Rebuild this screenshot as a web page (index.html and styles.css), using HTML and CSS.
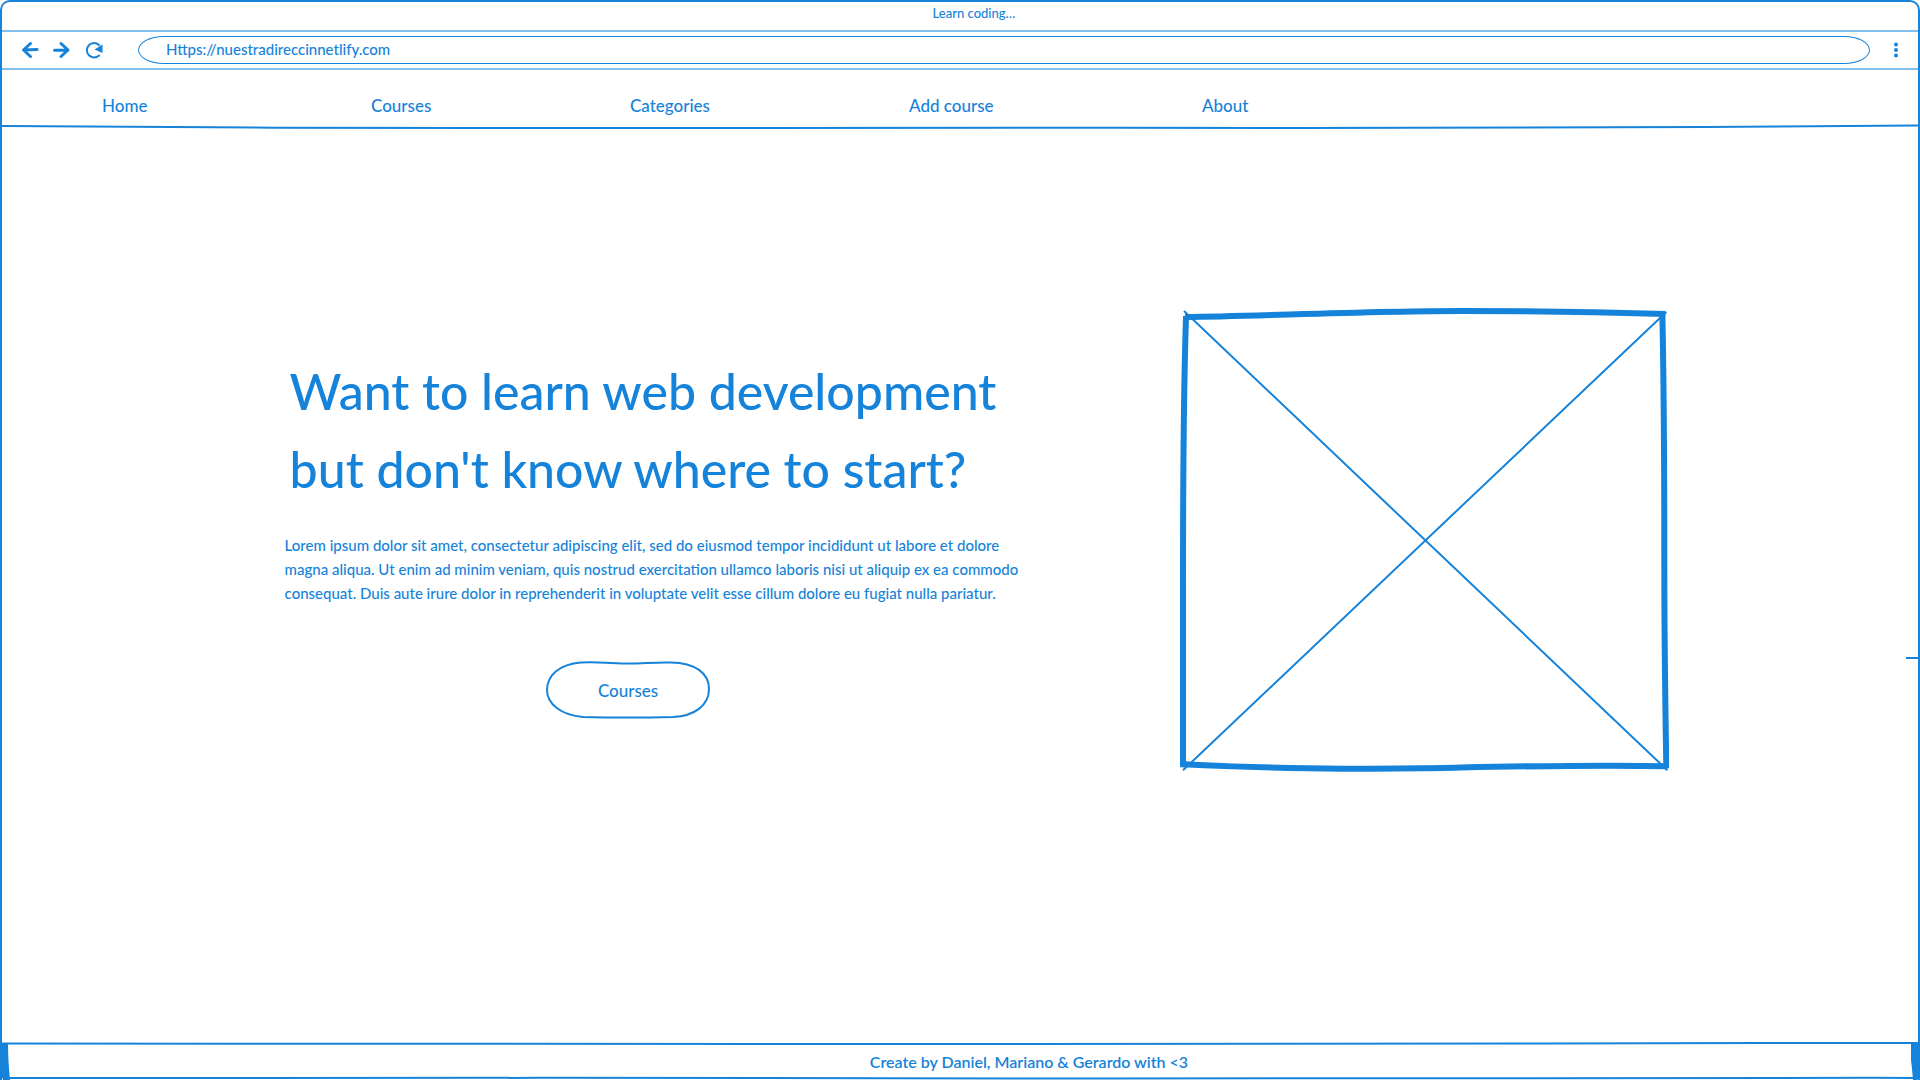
FILE: index.html
```html
<!DOCTYPE html>
<html lang="en">
<head>
  <meta charset="utf-8">
  <meta name="viewport" content="width=device-width, initial-scale=1">
  <title>Learn coding…</title>
  <link rel="stylesheet" href="styles.css">
</head>
<body>
  <div class="frame">
    <div class="titlebar">Learn coding…</div>

    <div class="toolbar">
      <div class="history">
        <button class="icon-button" type="button" aria-label="Back">
          <svg class="icon" viewBox="0 0 20 20"><path d="M10.500 3.500 3.500 10l7 6.500M3.500 10 17 9.500" /></svg>
        </button>
        <button class="icon-button" type="button" aria-label="Forward">
          <svg class="icon" viewBox="0 0 20 20"><path d="M9 3.500 16 10l-7 6.500M16 10 2.500 10.200" /></svg>
        </button>
        <button class="icon-button" type="button" aria-label="Reload">
          <svg class="icon" viewBox="0 0 20 20"><path class="thin" d="M15 5A7.200 7.200 0 1 0 15 15.500" /><path class="solid" d="M10.500 9.500 18.500 4.500V13Z" /></svg>
        </button>
      </div>
      <input class="address" type="text" aria-label="Address" value="Https://nuestradireccinnetlify.com">
      <button class="icon-button" type="button" aria-label="Menu">
        <svg class="icon" viewBox="0 0 20 20"><g class="solid"><circle cx="10" cy="4.500" r="2" /><circle cx="10" cy="10" r="2" /><circle cx="10" cy="15.500" r="2" /></g></svg>
      </button>
    </div>

    <nav class="nav">
      <a href="#">Home</a>
      <a href="#">Courses</a>
      <a href="#">Categories</a>
      <a href="#">Add course</a>
      <a href="#">About</a>
    </nav>
    <svg class="rule" viewBox="0 0 1920 6" preserveAspectRatio="none" aria-hidden="true">
      <path d="M0 2C200 3.500 300 4 480 4S1000 3.500 1300 4 1700 3 1920 1.500" />
    </svg>

    <main class="hero">
      <div class="copy">
        <h1>Want to learn web development<br>but don't know where to start?</h1>
        <p>Lorem ipsum dolor sit amet, consectetur adipiscing elit, sed do eiusmod tempor incididunt ut labore et dolore<br>magna aliqua. Ut enim ad minim veniam, quis nostrud exercitation ullamco laboris nisi ut aliquip ex ea commodo<br>consequat. Duis aute irure dolor in reprehenderit in voluptate velit esse cillum dolore eu fugiat nulla pariatur.</p>
        <button class="cta" type="button">
          <svg class="cta-outline" viewBox="0 0 166 58" aria-hidden="true"><path d="M36 1.500C50 0.500 70 2.500 84 2.500S112 1 126 1.500C150 2 164 12 164 28S150 55 128 56Q82 57 38 56C16 54 2 43 2 29S14 3 36 1.500Z" /></svg>
          <span>Courses</span>
        </button>
      </div>
      <svg class="picture" viewBox="0 0 488 464" role="img" aria-label="Picture placeholder">
        <path class="cross" d="M4 3 486 461M485 4 3 461" />
        <path class="edge" d="M5 9C80 8 190 3 280 3Q380 3 484 6" />
        <path class="edge" d="M481 5C483 100 483 190 483 260S484 400 485 459" />
        <path class="edge" d="M3 455C80 459 180 460 240 459S400 455 486 457" />
        <path class="edge" d="M6 8C3 100 3 190 3 270S3 400 3 458" />
      </svg>
    </main>

    <svg class="tick" viewBox="0 0 12 4" aria-hidden="true"><path d="M0 2H12" /></svg>

    <footer class="footer">
      <svg class="footer-line" viewBox="0 0 1920 4" preserveAspectRatio="none" aria-hidden="true"><path d="M0 1.500C300 2 500 1.500 960 2S1500 1.500 1760 1 1880 1.500 1920 1.500" /></svg>
      <div class="footer-row">
        <svg class="footer-side" viewBox="0 0 10 30" aria-hidden="true"><path d="M0-3H8Q8 14 10 34H3Q0 26 0 20Z" /></svg>
        <p class="credit">Create by Daniel, Mariano &amp; Gerardo with &lt;3</p>
        <svg class="footer-side" viewBox="0 0 10 30" aria-hidden="true"><path d="M1-3H10V32L7 34H3Q2 22 1 14Z" /></svg>
      </div>
      <svg class="footer-line" viewBox="0 0 1920 4" preserveAspectRatio="none" aria-hidden="true"><path d="M4 2C400 1.500 700 2 1100 2.500S1700 1 1914 2" /></svg>
    </footer>
  </div>
</body>
</html>
```
FILE: styles.css
```css
:root {
  --ink: #1683da;
  --ink-soft: #83bfec;
}

* {
  box-sizing: border-box;
}

body {
  margin: 0;
  background: #fff;
  color: var(--ink);
  font-family: Lato, "Open Sans", sans-serif;
  font-weight: 500;
}

h1,
p {
  margin: 0;
  font-weight: inherit;
}

svg {
  display: block;
  fill: none;
  stroke: var(--ink);
  stroke-width: 2;
}

button,
input {
  margin: 0;
  padding: 0;
  border: 0;
  background: none;
  color: inherit;
  font: inherit;
}

.frame {
  position: relative;
  display: flex;
  flex-direction: column;
  min-height: 100vh;
  border: 2px solid var(--ink);
  border-bottom: 0;
  border-radius: 10px 10px 0 0;
}

/* Browser chrome */
.titlebar {
  height: 30px;
  padding-left: 28px;
  border-bottom: 2px solid var(--ink-soft);
  font-size: 13px;
  line-height: 22px;
  text-align: center;
}

.toolbar {
  display: flex;
  align-items: center;
  height: 38px;
  padding: 0 12px 0 18px;
  border-bottom: 2px solid var(--ink-soft);
}

.history {
  display: flex;
  gap: 12px;
}

.icon-button {
  width: 20px;
  height: 20px;
}

.icon {
  width: 20px;
  height: 20px;
  stroke-width: 3;
  stroke-linecap: round;
  stroke-linejoin: round;
}

.icon .thin {
  stroke-width: 2;
}

.icon .solid {
  fill: var(--ink);
  stroke: none;
}

.address {
  flex: 1;
  min-width: 0;
  height: 28px;
  margin: 0 16px 0 34px;
  padding: 0 27px 2px;
  border: 1px solid var(--ink);
  border-radius: 26px / 14px;
  font-size: 15px;
}

.nav {
  display: grid;
  grid-template-columns: 269fr 259fr 279fr 293fr 716fr;
  height: 54px;
  padding: 24px 0 0 100px;
  font-size: 17px;
  line-height: 24px;
}

.nav a {
  justify-self: start;
  color: inherit;
  text-decoration: none;
}

.rule {
  width: 100%;
  height: 6px;
}

/* Hero */
.hero {
  flex: 1;
  display: grid;
  grid-template-columns: minmax(0, 713fr) minmax(0, 488fr);
  column-gap: 13%;
  align-items: start;
  padding: 178px 13% 120px 14.75%;
}

.copy {
  display: flex;
  flex-direction: column;
  padding-top: 44px;
}

.copy h1 {
  padding-left: 5px;
  font-size: 50px;
  line-height: 78px;
  white-space: nowrap;
}

.copy p {
  margin-top: 25px;
  font-size: 15px;
  line-height: 24px;
  white-space: nowrap;
}

.cta {
  position: relative;
  align-self: center;
  width: 166px;
  height: 58px;
  margin: 56px 28px 0 0;
  font-size: 17px;
}

.cta-outline {
  position: absolute;
  inset: 0;
  width: 100%;
  height: 100%;
}

.picture {
  width: 100%;
}

.picture .edge {
  stroke-width: 6;
}

.tick {
  position: absolute;
  top: 60.7%;
  right: 0;
  width: 12px;
  height: 4px;
}

/* Footer */
.footer {
  margin: 0 -2px;
}

.footer-line {
  width: 100%;
  height: 4px;
}

.footer-row {
  display: flex;
  justify-content: space-between;
  height: 30px;
}

.footer-side {
  width: 10px;
  height: 30px;
  overflow: visible;
  fill: var(--ink);
  stroke: none;
}

.credit {
  flex: 1;
  padding-left: 138px;
  font-size: 16px;
  font-weight: 600;
  line-height: 32px;
  text-align: center;
}
```
